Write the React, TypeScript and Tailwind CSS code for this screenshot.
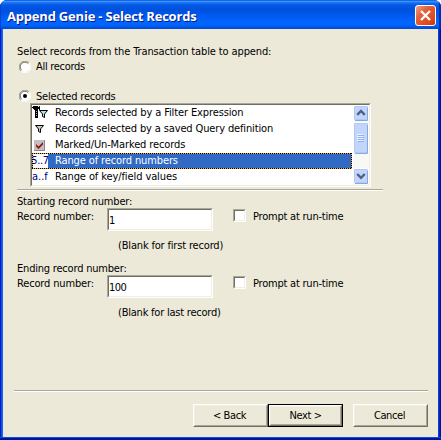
import type { ReactNode } from 'react';

const FACE = "font-['DejaVu_Sans_Condensed','DejaVu_Sans',sans-serif]";

function Label({ children, className = '' }: { children: ReactNode; className?: string }) {
  return <span className={`block whitespace-pre leading-[15px] ${className}`}>{children}</span>;
}

function Radio({ checked = false }: { checked?: boolean }) {
  return (
    <svg width="12" height="12" viewBox="0 0 12 12" className="block shrink-0">
      <circle cx="6" cy="6" r="5" fill="#fff" />
      <path d="M1.8 10.2A5.5 5.5 0 0 1 10.2 1.8" fill="none" stroke="#9d9a8c" />
      <path d="M2.6 9.2A4.5 4.5 0 0 1 9.2 2.6" fill="none" stroke="#716f64" />
      <path d="M10.2 1.8A5.5 5.5 0 0 1 1.8 10.2" fill="none" stroke="#fff" />
      {checked && <circle cx="6" cy="6" r="2" fill="#000" />}
    </svg>
  );
}

function Funnel({ fill }: { fill: string }) {
  return <path d="M0.5 0.5H8.5L5.5 4V7.5L3.5 6.5V4Z" fill={fill} stroke="#000" />;
}

function FilterIcon() {
  return (
    <svg width="17" height="16" viewBox="0 0 17 16" className="block">
      <path d="M0 3V2H1V1H6V2H7V1H8V5H7V4H6V5H2V4H1V3Z" fill="#000" />
      <path d="M3 5H6V13H3Z" fill="#000" />
      <path d="M4.5 6V12" stroke="#aaa" strokeDasharray="1 1" />
      <g transform="translate(7 5)"><Funnel fill="#a5e8ec" /></g>
    </svg>
  );
}

function QueryIcon() {
  return (
    <svg width="16" height="16" viewBox="0 0 16 16" className="block">
      <g transform="translate(3 4)"><Funnel fill="#c8c8c8" /></g>
    </svg>
  );
}

function MarkIcon() {
  return (
    <svg width="16" height="16" viewBox="0 0 16 16" className="block">
      <rect x="2" y="3" width="11" height="11" fill="#c0c0c0" />
      <path d="M2 13.5H12.5V3" fill="none" stroke="#888" />
      <path d="M4 7L6.5 9.5L11 5V7.5L6.5 12L4 9.5Z" fill="#9c1010" />
    </svg>
  );
}

function Option({ icon, text, selected = false, className = '' }: { icon: ReactNode; text: string; selected?: boolean; className?: string }) {
  return (
    <div className={`relative flex h-4 ${selected ? 'text-white' : ''}`}>
      <div className="h-4 w-4 shrink-0 text-[#000080]">{icon}</div>
      <div className={`flex-1 pl-[7px] ${selected ? 'bg-[#316ac5]' : ''}`}>
        <Label className={className}>{text}</Label>
      </div>
      {selected && (
        <svg width="320" height="16" className="absolute left-0 top-0">
          <rect x="0.5" y="0.5" width="319" height="15" fill="none" stroke="#e5ad45" />
          <path d="M0 0.5H320M0 15.5H320M0.5 0V16M319.5 0V16" fill="none" stroke="#000" strokeDasharray="1 1" shapeRendering="crispEdges" />
        </svg>
      )}
    </div>
  );
}

function Arrow({ down = false }: { down?: boolean }) {
  return (
    <svg width="16" height="17" viewBox="0 0 16 17" className="block shrink-0">
      <rect x="0.5" y="0.5" width="15" height="15" rx="1.5" fill="#c5d7fb" stroke="#fff" />
      <rect x="1.5" y="1.5" width="13" height="13" rx="1" fill="#c3d5fd" stroke="#b1c8f5" />
      <path d="M2 15.5H14.5V3" fill="none" stroke="#84a8e0" />
      <path d={down ? 'M4.2 6L8 9.8L11.8 6' : 'M4.2 9.8L8 6L11.8 9.8'} fill="none" stroke="#4d6185" strokeWidth="2.4" />
    </svg>
  );
}

function Rule({ className }: { className: string }) {
  return <div className={`h-0.5 border-t border-b border-t-[#aca899] border-b-white ${className}`} />;
}

function CheckBox() {
  return (
    <div className="h-[13px] w-[13px] shrink-0 border border-b-white border-l-[#aca899] border-r-white border-t-[#aca899]">
      <div className="h-full w-full border border-b-[#f1efe2] border-l-[#716f64] border-r-[#f1efe2] border-t-[#716f64] bg-white" />
    </div>
  );
}

function NumberBlock({ title, value, hint, titleClass, hintClass }: { title: string; value: string; hint: string; titleClass: string; hintClass: string }) {
  return (
    <div className="h-[67px]">
      <Label className={`pt-px -mb-px ${titleClass}`}>{title}</Label>
      <div className="flex h-[23px]">
        <Label className="w-[90px] pt-px tracking-[-0.15px]">Record number:</Label>
        <div className="h-[23px] w-[106px] border border-b-white border-l-[#aca899] border-r-white border-t-[#aca899]">
          <div className="h-full border border-b-[#f1efe2] border-l-[#716f64] border-r-[#f1efe2] border-t-[#716f64] bg-white pt-[3px]">
            <Label className="tracking-[-0.5px]">{value}</Label>
          </div>
        </div>
        <div className="ml-5 flex pt-px">
          <CheckBox />
          <Label className="ml-[7px] tracking-[-0.22px]">Prompt at run-time</Label>
        </div>
      </div>
      <Label className={`mt-[7px] pl-[101px] ${hintClass}`}>{hint}</Label>
    </div>
  );
}

function Button({ children, primary = false }: { children: string; primary?: boolean }) {
  return (
    <div className={`h-[23px] w-[75px] ${primary ? 'border border-black' : ''}`}>
      <div className="h-full border border-b-[#716f64] border-l-white border-r-[#716f64] border-t-white">
        <div className={`flex h-full items-center justify-center border border-b-[#aca899] border-l-[#f1efe2] border-r-[#aca899] border-t-[#f1efe2] ${primary ? '' : 'pr-0.5'}`}>
          <Label className="tracking-[-0.4px]">{children}</Label>
        </div>
      </div>
    </div>
  );
}

export default function App() {
  return (
    <div className="bg-white">
      <div className={`flex h-[440px] w-[441px] flex-col overflow-hidden rounded-t-[7px] bg-[#0831d9] text-[11px] text-black ${FACE}`}>
        <header className="flex h-[29px] shrink-0 justify-between bg-[linear-gradient(#0050d8_0%,#3c91ff_5%,#1b75f4_9%,#0459e4_17%,#0050dd_35%,#0058ee_52%,#0066ff_75%,#0062fb_88%,#0046cf_100%)] pl-[7px] pr-[5px] shadow-[inset_1px_0_#0040cc,inset_-2px_0_#0030b0]">
          <h1 className="whitespace-pre pt-[7px] font-['Open_Sans',sans-serif] text-[13px] font-bold leading-[18px] tracking-[-0.2px] text-white [text-shadow:1px_1px_#0a1883]">Append Genie - Select Records</h1>
          <svg width="21" height="21" viewBox="0 0 21 21" className="mt-[5px] block">
            <defs>
              <linearGradient id="close" x1="0" y1="0" x2="1" y2="1">
                <stop offset="0" stopColor="#f0a58c" />
                <stop offset="0.35" stopColor="#e3613c" />
                <stop offset="0.75" stopColor="#e04a1b" />
                <stop offset="1" stopColor="#b83405" />
              </linearGradient>
            </defs>
            <rect x="0.5" y="0.5" width="20" height="20" rx="2.5" fill="url(#close)" stroke="#fff" />
            <path d="M6 6L15 15M15 6L6 15" stroke="#fff" strokeWidth="2.3" />
          </svg>
        </header>
        <div className="flex h-[409px] shrink-0 border-b border-[#0a50e0]">
          <div className="w-[3px] bg-[linear-gradient(90deg,#0019cf_33%,#0855dd_33%_66%,#1668f0_66%)]" />
          <main className="h-[408px] w-[435px] bg-[#ece9d8] pl-[14px] pt-[15px]">
            <Label className="tracking-[-0.12px]">Select records from the Transaction table to append:</Label>
            <div className="flex h-[15px] items-center pl-0.5">
              <Radio />
              <Label className="ml-[5px] tracking-[-0.3px]">All records</Label>
            </div>
            <div className="mt-[14px] flex h-[15px] items-center pl-0.5">
              <Radio checked />
              <Label className="ml-[5px] pt-px tracking-[-0.2px]">Selected records</Label>
            </div>
            <div className="ml-[13px] h-[84px] w-[341px] border border-b-white border-l-[#aca899] border-r-white border-t-[#aca899]">
              <div className="flex h-full border border-b-[#f1efe2] border-l-[#716f64] border-r-[#f1efe2] border-t-[#716f64] bg-white">
                <div className="w-[320px]">
                  <Option icon={<FilterIcon />} text="Records selected by a Filter Expression" className="tracking-[-0.12px]" />
                  <Option icon={<QueryIcon />} text="Records selected by a saved Query definition" className="tracking-[-0.14px]" />
                  <Option icon={<MarkIcon />} text="Marked/Un-Marked records" className="tracking-[-0.12px]" />
                  <Option selected icon={<div className="flex h-4 w-4 justify-center"><Label className="tracking-[-0.4px]">5..7</Label></div>} text="Range of record numbers" className="tracking-[-0.12px]" />
                  <Option icon={<Label>a..f</Label>} text="Range of key/field values" className="tracking-[-0.1px]" />
                </div>
                <div className="ml-px flex w-4 flex-col bg-[#f8f8f4]">
                  <Arrow />
                  <svg width="16" height="33" viewBox="0 0 16 33" className="block shrink-0">
                    <rect x="0.5" y="0.5" width="15" height="31" rx="1.5" fill="#c5d7fb" stroke="#fff" />
                    <rect x="1.5" y="1.5" width="13" height="29" rx="1" fill="#c3d5fd" stroke="#b1c8f5" />
                    <path d="M2 31.5H14.5V3" fill="none" stroke="#84a8e0" />
                    <path d="M4 12.5H10M4 14.5H10M4 16.5H10M4 18.5H10" stroke="#eef4fe" />
                    <path d="M5 13.5H11M5 15.5H11M5 17.5H11M5 19.5H11" stroke="#8cb0f8" />
                  </svg>
                  <div className="flex-1" />
                  <Arrow down />
                </div>
              </div>
            </div>
            <Rule className="mt-0.5 w-[366px]" />
            <div className="pt-0.5">
              <NumberBlock title="Starting record number:" value="1" hint="(Blank for first record)" titleClass="tracking-[-0.17px]" hintClass="tracking-[-0.17px]" />
              <NumberBlock title="Ending record number:" value="100" hint="(Blank for last record)" titleClass="tracking-[-0.2px]" hintClass="tracking-[-0.22px]" />
            </div>
            <Rule className="-ml-[3px] mt-[63px] w-[414px]" />
            <footer className="mt-3 flex pl-[176px]">
              <Button>{'< Back'}</Button>
              <Button primary>{'Next >'}</Button>
              <div className="w-[10px]" />
              <Button>Cancel</Button>
            </footer>
          </main>
          <div className="w-[3px] bg-[linear-gradient(90deg,#0841d9_33%,#0025b5_33%_66%,#00138c_66%)]" />
        </div>
        <div className="h-0.5 shrink-0 bg-[#00159c]" />
      </div>
    </div>
  );
}
